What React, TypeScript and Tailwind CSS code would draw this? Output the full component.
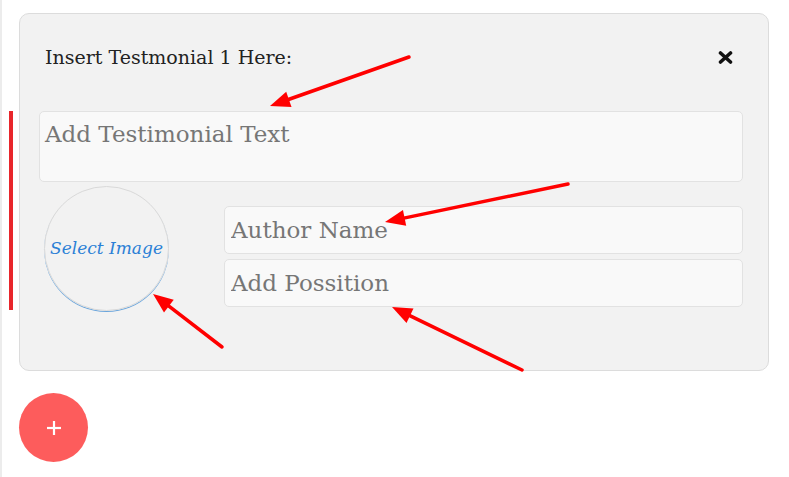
const arrows = [
  { x1: 409, y1: 57, x2: 270, y2: 106 },
  { x1: 568, y1: 184, x2: 385, y2: 222 },
  { x1: 222, y1: 347, x2: 153, y2: 294 },
  { x1: 522, y1: 370, x2: 392, y2: 307 },
];

// red annotation arrow: shaft + filled head at the tip
const Arrow = ({ x1, y1, x2, y2 }: { x1: number; y1: number; x2: number; y2: number }) => {
  const dx = x2 - x1;
  const dy = y2 - y1;
  const len = Math.hypot(dx, dy);
  const ux = dx / len;
  const uy = dy / len;
  const head = 20;
  const half = 8;
  const bx = x2 - ux * head;
  const by = y2 - uy * head;
  const pts = `${x2},${y2} ${bx - uy * half},${by + ux * half} ${bx + uy * half},${by - ux * half}`;
  return (
    <g>
      <line x1={x1} y1={y1} x2={bx + ux * 2} y2={by + uy * 2} stroke="#ff0000" strokeWidth={3.5} strokeLinecap="round" />
      <polygon points={pts} fill="#ff0000" />
    </g>
  );
};

const App = () => {
  return (
    <div
      className="relative w-[789px] min-h-[477px] bg-white border-l-2 border-[#ececec]"
      style={{ fontFamily: '"DejaVu Serif", "Liberation Serif", serif' }}
    >
      {/* red marker on the left */}
      <div className="absolute left-[7px] top-[111px] w-[4px] h-[199px] bg-[#e8262b]" />

      <div className="pl-[17px] pt-[13px]">
        {/* Testimonial card */}
        <div className="w-[750px] h-[358px] rounded-[10px] border border-[#dcdcdc] bg-[#f2f2f2] pl-[19px] pr-[25px] pt-[30px]">
          <div className="flex h-[26px] items-center justify-between pl-[6px] pr-[10px]">
            <span className="text-[19px] text-[#222]">Insert Testmonial 1 Here:</span>
            <svg width="15" height="13" viewBox="0 0 15 13">
              <line x1="2.5" y1="2" x2="12.5" y2="11" stroke="#111" strokeWidth="3.6" strokeLinecap="round" />
              <line x1="12.5" y1="2" x2="2.5" y2="11" stroke="#111" strokeWidth="3.6" strokeLinecap="round" />
            </svg>
          </div>

          <textarea
            placeholder="Add Testimonial Text"
            className="mt-[41px] block h-[71px] w-full resize-none rounded-[5px] border border-[#e2e2e2] bg-[#f9f9f9] px-[5px] pt-[6px] text-[23px] leading-[32px] text-[#444] placeholder:text-[#767676] outline-none"
          />

          <div className="mt-[4px] flex">
            <div className="ml-[5px] flex h-[125px] w-[125px] shrink-0 items-center justify-center rounded-full border border-[#d9d9d9] shadow-[0_1px_0_#6aa5dc]">
              <span className="text-[17px] italic text-[#2b80d6]">Select Image</span>
            </div>
            <div className="ml-[55px] mt-[20px] flex flex-1 flex-col gap-[5px]">
              <input
                placeholder="Author Name"
                className="h-[48px] w-full rounded-[5px] border border-[#e2e2e2] bg-[#f9f9f9] px-[6px] text-[23px] text-[#444] placeholder:text-[#767676] outline-none"
              />
              <input
                placeholder="Add Possition"
                className="h-[48px] w-full rounded-[5px] border border-[#e2e2e2] bg-[#f9f9f9] px-[6px] text-[23px] text-[#444] placeholder:text-[#767676] outline-none"
              />
            </div>
          </div>
        </div>

        {/* Add button */}
        <button className="mt-[22px] flex h-[69px] w-[69px] items-center justify-center rounded-full bg-[#fd5c5c]">
          <svg width="18" height="18" viewBox="0 0 18 18">
            <line x1="9" y1="2" x2="9" y2="16" stroke="#fff" strokeWidth="2.2" />
            <line x1="2" y1="9" x2="16" y2="9" stroke="#fff" strokeWidth="2.2" />
          </svg>
        </button>
      </div>

      {/* annotation arrows */}
      <svg className="pointer-events-none absolute left-[-2px] top-0" width="789" height="477">
        {arrows.map((a, i) => (
          <Arrow key={i} {...a} />
        ))}
      </svg>
    </div>
  );
};

export default App;
